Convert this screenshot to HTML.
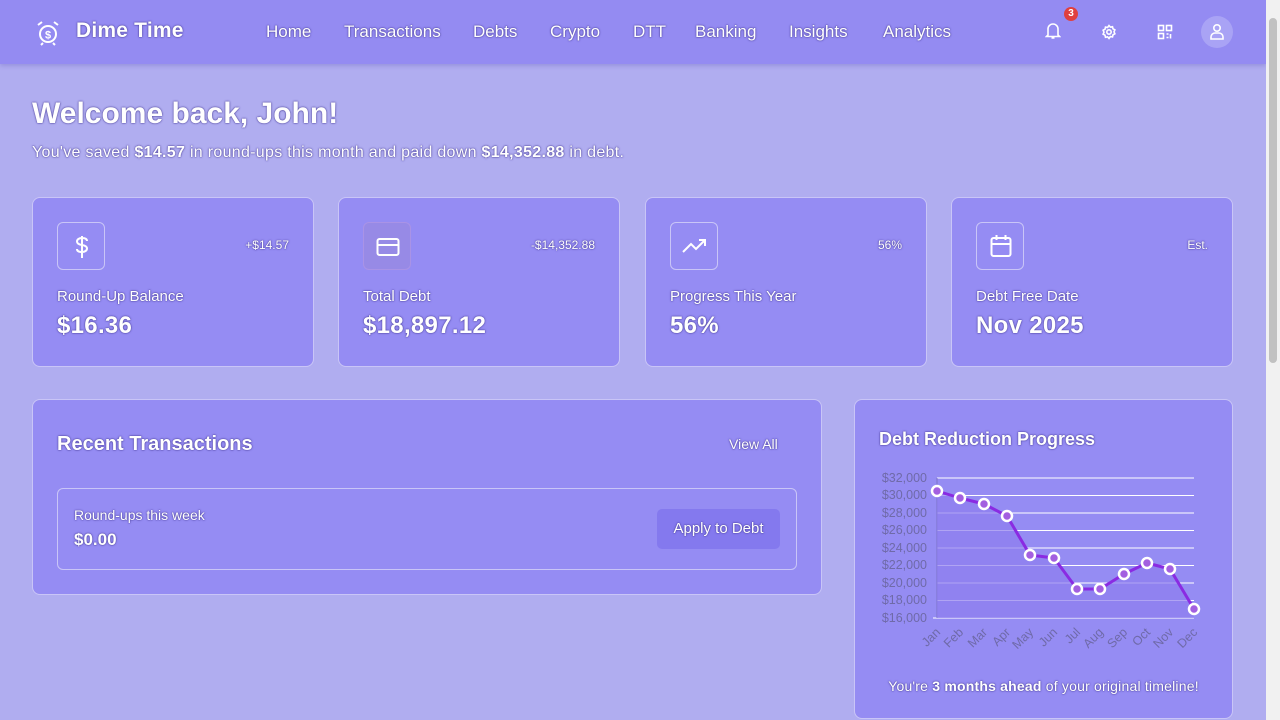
<!DOCTYPE html>
<html><head><meta charset="utf-8"><style>
*{box-sizing:border-box;margin:0;padding:0}
body{width:1280px;height:720px;overflow:hidden;background:#b0adf0;font-family:"Liberation Sans","DejaVu Sans",sans-serif;color:#fff;position:relative}
.ts{text-shadow:0 0 2px #4a3f9a,0 0 1px #4a3f9a}
nav{position:absolute;left:0;top:0;width:1266px;height:64px;background:#948bf2;box-shadow:0 2px 4px rgba(80,70,170,.25)}
.logo{position:absolute;left:36px;top:20px}
.brand{position:absolute;left:76px;top:19px;font-size:21px;font-weight:bold;letter-spacing:.2px}
.links a{position:absolute;top:22px;font-size:17px;color:#fff;text-decoration:none}
.ic{position:absolute;top:22px}
.sb{position:absolute;right:0;top:0;width:14px;height:720px;background:#f1f1f1}
.sb div{position:absolute;left:3px;top:18px;width:8px;height:345px;background:#c1c1c1;border-radius:4px}
h1{position:absolute;left:32px;top:97px;font-size:30px;font-weight:bold}
.sub{position:absolute;left:32px;top:144px;font-size:16px;letter-spacing:.3px}
.card{position:absolute;top:197px;width:282px;height:170px;background:#958cf3;border:1px solid #c9c5f7;border-radius:8px}
.card .box{position:absolute;left:24px;top:24px;width:48px;height:48px;border:1px solid #c9c5f7;border-radius:6px}
.card .tag{position:absolute;right:24px;top:40px;font-size:12px}
.card .lbl{position:absolute;left:24px;top:90px;font-size:15px}
.card .val{position:absolute;left:24px;top:114px;font-size:24px;font-weight:bold;letter-spacing:.3px}
.panel{position:absolute;background:#958cf3;border:1px solid #c9c5f7;border-radius:8px}
</style></head><body>
<nav>
<svg class="logo" width="24" height="26" viewBox="0 0 24 26" fill="none" stroke="#fff" stroke-width="2"><circle cx="12" cy="14" r="8"/><path d="M2 5l4-3M22 5l-4-3M7 23l-2 2M17 23l2 2"/><text x="12" y="18.5" font-size="11" fill="#fff" stroke="none" text-anchor="middle" font-weight="bold">$</text></svg>
<div class="brand ts">Dime Time</div>
<div class="links ts"><a style="left:266px">Home</a><a style="left:344px">Transactions</a><a style="left:473px">Debts</a><a style="left:550px">Crypto</a><a style="left:633px">DTT</a><a style="left:695px">Banking</a><a style="left:789px">Insights</a><a style="left:883px">Analytics</a></div>
<svg class="ic" style="left:1045px" width="16" height="18" viewBox="0 0 16 18" fill="none" stroke="#fff" stroke-width="1.6"><path d="M3 13V7a5 5 0 0110 0v6l1.5 1.5h-13z M6.5 16h3"/></svg>
<div style="position:absolute;left:1064px;top:7px;width:14px;height:14px;border-radius:7px;background:#e0403f;font-size:10px;font-weight:bold;text-align:center;line-height:14px">3</div>
<svg class="ic" style="left:1101px;top:24px" width="16" height="16" viewBox="0 0 16 16" fill="none" stroke="#fff" stroke-width="1.6"><circle cx="8" cy="8" r="2.2"/><path d="M8 1.5l1.4 1.6 2.1-.4.5 2.1 1.9 1-.9 2 .9 2-1.9 1-.5 2.1-2.1-.4L8 14.5l-1.4-1.6-2.1.4-.5-2.1-1.9-1 .9-2-.9-2 1.9-1 .5-2.1 2.1.4z"/></svg>
<svg class="ic" style="left:1157px;top:24px" width="16" height="16" viewBox="0 0 16 16" fill="none" stroke="#fff" stroke-width="1.6"><rect x="1.5" y="1.5" width="5" height="5"/><rect x="9.5" y="1.5" width="5" height="5"/><rect x="1.5" y="9.5" width="5" height="5"/><path d="M9.5 10h2M13.5 10v4.5M9.5 13.5h2"/></svg>
<div style="position:absolute;left:1201px;top:16px;width:32px;height:32px;border-radius:16px;background:#a9a3f5"></div>
<svg class="ic" style="left:1209px;top:23px" width="16" height="18" viewBox="0 0 16 18" fill="none" stroke="#fff" stroke-width="1.6"><circle cx="8" cy="5" r="3.2"/><path d="M2 16v-2a4 4 0 014-4h4a4 4 0 014 4v2z"/></svg>
</nav>
<div class="sb"><div></div></div>
<h1 class="ts">Welcome back, John!</h1>
<div class="sub ts">You've saved <b>$14.57</b> in round-ups this month and paid down <b>$14,352.88</b> in debt.</div>

<div class="card" style="left:32px"><div class="box"><svg style="position:absolute;left:13px;top:11px" width="22" height="26" viewBox="0 0 22 26" fill="none" stroke="#fff" stroke-width="2"><path d="M11 2v22M16 7c0-2-2-3-5-3s-5 1.5-5 3.5 2 3 5 3.5 5 1.5 5 3.5-2 3.5-5 3.5-5-1-5-3"/></svg></div><div class="tag ts">+$14.57</div><div class="lbl ts">Round-Up Balance</div><div class="val ts">$16.36</div></div>
<div class="card" style="left:338px"><div class="box" style="background:#978ae6;border-color:#a993e6"><svg style="position:absolute;left:12px;top:14px" width="24" height="20" viewBox="0 0 24 20" fill="none" stroke="#fff" stroke-width="2"><rect x="1.5" y="2" width="21" height="16" rx="2"/><path d="M1.5 8h21"/></svg></div><div class="tag ts">-$14,352.88</div><div class="lbl ts">Total Debt</div><div class="val ts">$18,897.12</div></div>
<div class="card" style="left:645px"><div class="box"><svg style="position:absolute;left:11px;top:14px" width="26" height="18" viewBox="0 0 26 18" fill="none" stroke="#fff" stroke-width="2"><path d="M1 15l8-8 5 5 9-9M17 3h6v6"/></svg></div><div class="tag ts">56%</div><div class="lbl ts">Progress This Year</div><div class="val ts">56%</div></div>
<div class="card" style="left:951px"><div class="box"><svg style="position:absolute;left:13px;top:11px" width="22" height="24" viewBox="0 0 22 24" fill="none" stroke="#fff" stroke-width="2"><rect x="1.5" y="4" width="19" height="18" rx="2"/><path d="M1.5 10h19M6.5 1v5M15.5 1v5"/></svg></div><div class="tag ts">Est.</div><div class="lbl ts">Debt Free Date</div><div class="val ts">Nov 2025</div></div>

<div class="panel" style="left:32px;top:399px;width:790px;height:196px">
<div class="ts" style="position:absolute;left:24px;top:33px;font-size:20px;font-weight:bold">Recent Transactions</div>
<div class="ts" style="position:absolute;left:696px;top:36px;font-size:14px">View All</div>
<div style="position:absolute;left:24px;top:88px;width:740px;height:82px;border:1px solid #c9c5f7;border-radius:6px">
<div class="ts" style="position:absolute;left:16px;top:18px;font-size:14px">Round-ups this week</div>
<div class="ts" style="position:absolute;left:16px;top:41px;font-size:17px;font-weight:bold">$0.00</div>
<div class="ts" style="position:absolute;left:599px;top:20px;width:123px;height:40px;background:#8479ee;border-radius:5px;font-size:15px;text-align:center;line-height:40px">Apply to Debt</div>
</div></div>

<div class="panel" style="left:854px;top:399px;width:379px;height:320px">
<div class="ts" style="position:absolute;left:24px;top:29px;font-size:18px;font-weight:bold">Debt Reduction Progress</div>
<div class="ts" style="position:absolute;left:0;width:100%;top:278px;font-size:14px;text-align:center;letter-spacing:.2px">You're <b>3 months ahead</b> of your original timeline!</div>
</div>
<svg style="position:absolute;left:855px;top:460px" width="360" height="200" viewBox="855 460 360 200" font-family="Liberation Sans, sans-serif" font-size="12.5" fill="#6f6aa8">
<g stroke="#fff" stroke-width="1"><path d="M937 478H1194M937 495.5H1194M937 513H1194M937 530.5H1194M937 548H1194M937 565.5H1194M937 583H1194M937 600.5H1194M933 618H1194"/></g>
<path d="M937 478V618" stroke="#7a72c8"/>
<g text-anchor="end"><text x="927" y="482">$32,000</text><text x="927" y="499">$30,000</text><text x="927" y="517">$28,000</text><text x="927" y="534">$26,000</text><text x="927" y="552">$24,000</text><text x="927" y="569">$22,000</text><text x="927" y="587">$20,000</text><text x="927" y="604">$18,000</text><text x="927" y="622">$16,000</text></g>
<path d="M937 491L960 498 984 504 1007 516 1030 555 1054 558 1077 589 1100 589 1124 574 1147 563 1170 569 1194 609V618H937Z" fill="#8f7eee" opacity=".7"/>
<path d="M937 491L960 498 984 504 1007 516 1030 555 1054 558 1077 589 1100 589 1124 574 1147 563 1170 569 1194 609" fill="none" stroke="#8a2be2" stroke-width="3" stroke-linejoin="round"/>
<g fill="#a35fe0" stroke="#fff" stroke-width="2.5"><circle cx="937" cy="491" r="5"/><circle cx="960" cy="498" r="5"/><circle cx="984" cy="504" r="5"/><circle cx="1007" cy="516" r="5"/><circle cx="1030" cy="555" r="5"/><circle cx="1054" cy="558" r="5"/><circle cx="1077" cy="589" r="5"/><circle cx="1100" cy="589" r="5"/><circle cx="1124" cy="574" r="5"/><circle cx="1147" cy="563" r="5"/><circle cx="1170" cy="569" r="5"/><circle cx="1194" cy="609" r="5"/></g>
<g text-anchor="end"><text transform="translate(941,633) rotate(-45)">Jan</text><text transform="translate(964,633) rotate(-45)">Feb</text><text transform="translate(988,633) rotate(-45)">Mar</text><text transform="translate(1011,633) rotate(-45)">Apr</text><text transform="translate(1034,633) rotate(-45)">May</text><text transform="translate(1058,633) rotate(-45)">Jun</text><text transform="translate(1081,633) rotate(-45)">Jul</text><text transform="translate(1104,633) rotate(-45)">Aug</text><text transform="translate(1128,633) rotate(-45)">Sep</text><text transform="translate(1151,633) rotate(-45)">Oct</text><text transform="translate(1174,633) rotate(-45)">Nov</text><text transform="translate(1198,633) rotate(-45)">Dec</text></g>
</svg>
</body></html>
